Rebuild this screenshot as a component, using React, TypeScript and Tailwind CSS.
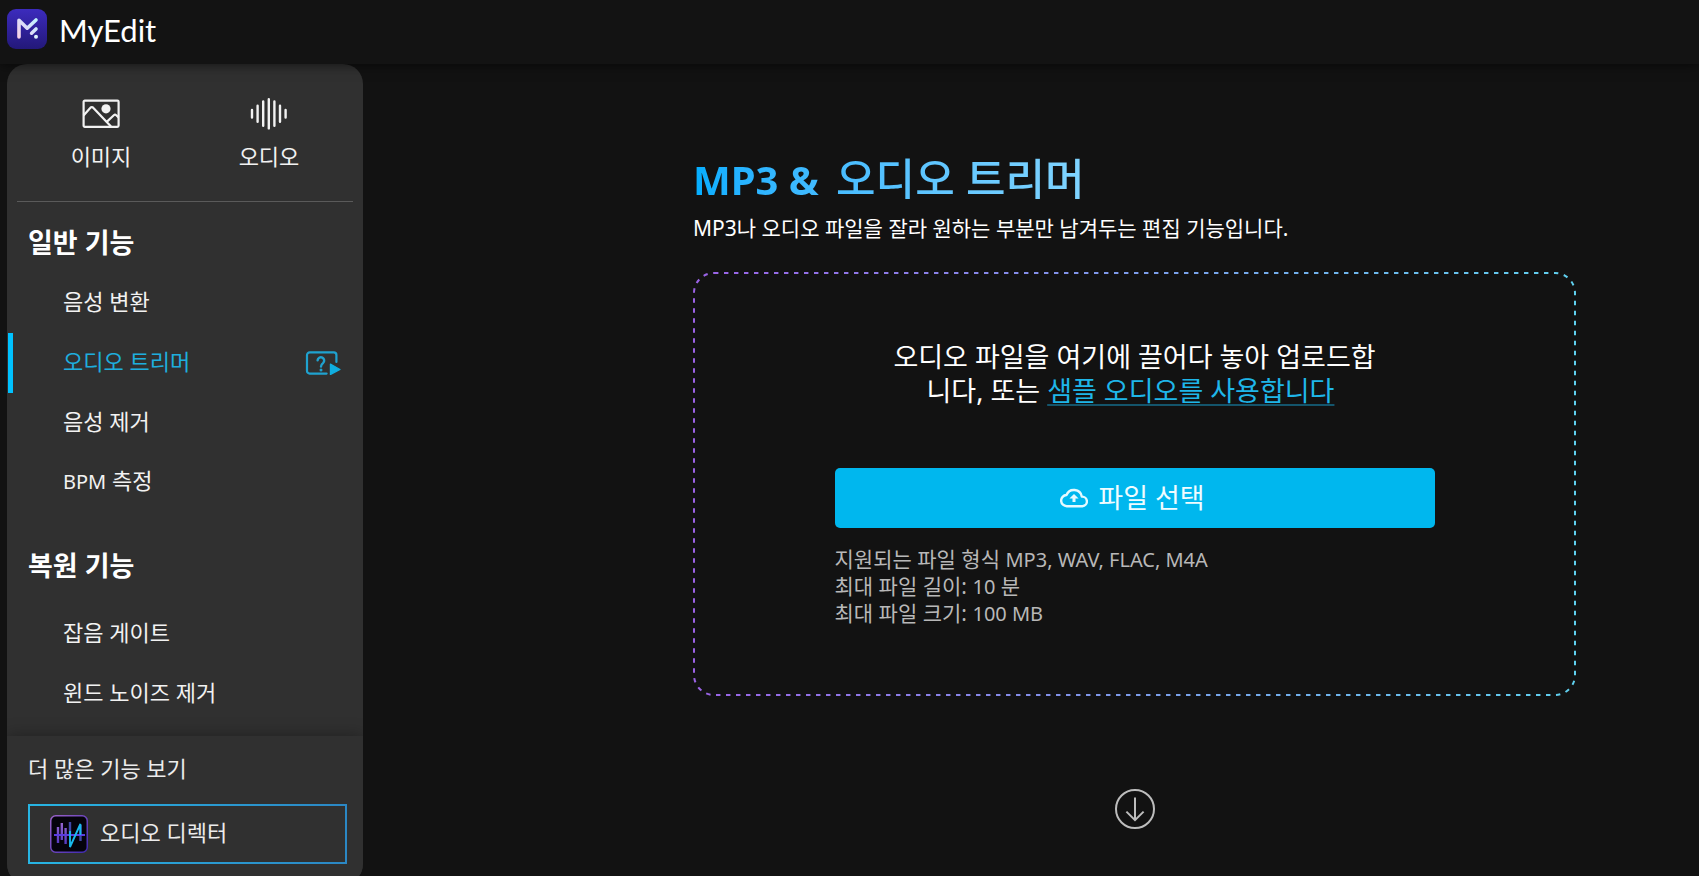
import React from "react";

function LogoMark() {
  return (
    <svg className="size-10 shrink-0" viewBox="0 0 40 40" aria-hidden="true">
      <defs>
        <linearGradient id="logo-bg" x1="0" y1="0" x2="0" y2="1">
          <stop offset="0" stopColor="#3c2bbd" />
          <stop offset="1" stopColor="#231879" />
        </linearGradient>
        <linearGradient id="logo-m" x1="10" y1="29" x2="31" y2="10" gradientUnits="userSpaceOnUse">
          <stop offset="0" stopColor="#fbd0e4" />
          <stop offset="0.5" stopColor="#dcdcf8" />
          <stop offset="1" stopColor="#bdf6ff" />
        </linearGradient>
      </defs>
      <rect width="40" height="40" rx="9" fill="url(#logo-bg)" />
      <g stroke="url(#logo-m)" strokeWidth="3.6" strokeLinecap="round" strokeLinejoin="round" fill="none">
        <path d="M12 28V11.2L20.2 19.2L29 11" />
        <path d="M24.6 24.2L29 20" />
      </g>
      <circle cx="29" cy="27.8" r="2" fill="#dff3fb" />
    </svg>
  );
}

function ImageIcon() {
  return (
    <svg className="h-8 w-10" viewBox="0 0 40 32" fill="none" stroke="#f2f2f2" strokeWidth="2.2" aria-hidden="true">
      <rect x="2.6" y="2.6" width="35" height="26.2" rx="1.2" />
      <path d="M2.6 17.5L9.4 9.8a1.8 1.8 0 0 1 2.8 0L30 28.6M26 23.6L32.8 17.2a1.8 1.8 0 0 1 2.4 0L37.6 19.4" />
      <circle cx="25" cy="10.8" r="4.6" fill="#f2f2f2" stroke="none" />
    </svg>
  );
}

function AudioIcon() {
  return (
    <svg className="h-8 w-10" viewBox="0 0 40 32" fill="none" stroke="#f2f2f2" strokeWidth="2.4" strokeLinecap="round" aria-hidden="true">
      <path d="M3 12V19.6M8.6 7.8V23.8M14.2 3.4V27.8M19.8 1.2V30.4M25.4 3.4V27.8M31 7.8V23.8M36.6 12V19.6" />
    </svg>
  );
}

function TutorialIcon() {
  return (
    <svg className="h-6 w-9" viewBox="0 0 36 24" fill="none" stroke="#1fa2cf" strokeWidth="2.2" strokeLinecap="round" aria-hidden="true">
      <path d="M31.4 11V4a2.6 2.6 0 0 0-2.6-2.6H4.6A2.6 2.6 0 0 0 2 4v16a2.6 2.6 0 0 0 2.6 2.6h17" />
      <path d="M12.6 9.4a3.3 3.3 0 1 1 5.4 2.7c-1.4 1.1-2 1.6-2 3.4" strokeWidth="2.4" />
      <circle cx="16" cy="19" r="1.5" fill="#1fa2cf" stroke="none" />
      <path d="M25.4 13L35 18.4L25.4 23.6Z" fill="#10aee0" stroke="#10aee0" strokeWidth="1.2" strokeLinejoin="round" />
    </svg>
  );
}

function DirectorIcon() {
  return (
    <svg className="size-[38px] shrink-0" viewBox="0 0 38 38" aria-hidden="true">
      <defs>
        <linearGradient id="dir-frame" x1="0" y1="0" x2="1" y2="1">
          <stop offset="0" stopColor="#9a62c8" />
          <stop offset="1" stopColor="#3f2ab0" />
        </linearGradient>
        <linearGradient id="dir-bar" x1="0" y1="6" x2="0" y2="32" gradientUnits="userSpaceOnUse">
          <stop offset="0" stopColor="#9b6ad0" />
          <stop offset="1" stopColor="#4b32c0" />
        </linearGradient>
      </defs>
      <rect x="0.75" y="0.75" width="36.5" height="36.5" rx="5" fill="#05030c" stroke="url(#dir-frame)" strokeWidth="1.5" />
      <g stroke="url(#dir-bar)" strokeWidth="2.4">
        <path d="M8 12V28M11.8 8V25M15.6 13V29" />
        <path d="M20 7V20M30.5 10V26" stroke="#4048a8" />
      </g>
      <path d="M4 20H35" stroke="#5a3ce0" strokeWidth="1.8" />
      <path d="M20 16V32L30.4 9V20" stroke="#18b9ec" strokeWidth="1.9" fill="none" />
    </svg>
  );
}

function CloudUploadIcon() {
  return (
    <svg className="h-5 w-7 shrink-0" viewBox="0 0 28 20" fill="none" aria-hidden="true">
      <path
        d="M7 18.2a5.6 5.6 0 0 1-.5-11.2A8 8 0 0 1 21.8 8.6a4.8 4.8 0 0 1 .6 9.6Z"
        stroke="#e6faff"
        strokeWidth="2.4"
        strokeLinejoin="round"
      />
      <path d="M14 6L18.6 10.6H15.5V14H12.5V10.6H9.4Z" fill="#e6faff" />
    </svg>
  );
}

function DashedFrame() {
  return (
    <svg className="pointer-events-none absolute inset-0 size-full p-px" overflow="visible" aria-hidden="true">
      <defs>
        <linearGradient id="frame" x1="0" y1="0" x2="1" y2="0">
          <stop offset="0" stopColor="#9b62e6" />
          <stop offset="0.5" stopColor="#7d9cea" />
          <stop offset="1" stopColor="#5fd0ee" />
        </linearGradient>
      </defs>
      <rect width="100%" height="100%" rx="20" fill="none" stroke="url(#frame)" strokeWidth="2" strokeDasharray="4.4 5.6" />
    </svg>
  );
}

type Item = { id: string; label: React.ReactNode; active?: boolean };

const generalItems: Item[] = [
  { id: "voice-changer", label: "음성 변환" },
  { id: "trimmer", label: "오디오 트리머", active: true },
  { id: "vocal-remover", label: "음성 제거" },
  {
    id: "bpm",
    label: (
      <span>
        <span className="text-[20px]">BPM</span> 측정
      </span>
    ),
  },
];

const restoreItems: Item[] = [
  { id: "noise-gate", label: "잡음 게이트" },
  { id: "wind", label: "윈드 노이즈 제거" },
];

function NavList({ items }: { items: Item[] }) {
  return (
    <ul>
      {items.map(({ id, label, active }) => (
        <li key={id}>
          <a
            href="#"
            aria-current={active ? "page" : undefined}
            className={
              active
                ? "ml-px flex h-15 items-center justify-between border-l-5 border-[#00c2ff] pr-[22px] pb-1 pl-[50px] text-[#1eaede]"
                : "flex h-15 items-center pb-1 pl-14 text-[#f2f2f2]"
            }
          >
            {label}
            {active && (
              <span className="pt-1">
                <TutorialIcon />
              </span>
            )}
          </a>
        </li>
      ))}
    </ul>
  );
}

function Sidebar() {
  return (
    <aside className="flex w-[356px] shrink-0 flex-col self-start overflow-hidden rounded-[20px] bg-[#303030] text-[22px] leading-7">
      <div className="mx-[10px] grid grid-cols-2 border-b border-[#5a5a5a] pt-[34px] pb-[31px] text-[#f2f2f2]">
        <a href="#" className="flex flex-col items-center gap-3">
          <ImageIcon />
          이미지
        </a>
        <a href="#" className="flex flex-col items-center gap-3">
          <AudioIcon />
          오디오
        </a>
      </div>
      <nav className="flex flex-col pb-3">
        <h2 className="pt-[21px] pb-[10px] pl-[21px] text-[27px] leading-10 font-bold text-white">일반 기능</h2>
        <NavList items={generalItems} />
        <h2 className="pt-[33px] pb-[18px] pl-[21px] text-[27px] leading-10 font-bold text-white">복원 기능</h2>
        <NavList items={restoreItems} />
      </nav>
      <div className="bg-[#303030] px-[21px] pt-[18px] pb-5 text-[#ececec] shadow-[0_0_16px_rgba(0,0,0,0.35)]">
        <p>더 많은 기능 보기</p>
        <a href="#" className="mt-[22px] mr-[-5px] block bg-linear-to-r from-[#27b5e3] to-[#2b87c4] p-0.5">
          <span className="flex h-14 items-center gap-3 bg-[#303030] pl-5">
            <DirectorIcon />
            <span className="pb-1">오디오 디렉터</span>
          </span>
        </a>
      </div>
    </aside>
  );
}

export default function App() {
  return (
    <div className="flex h-screen flex-col overflow-hidden bg-[#121212] font-['Noto_Sans','Noto_Sans_CJK_KR',sans-serif] text-white">
      <header className="z-10 flex h-16 shrink-0 items-center bg-[#131313] pr-2 pb-[6px] pl-[7px] shadow-[0_0_12px_rgba(0,0,0,0.7)]">
        <a href="#" className="flex items-center gap-3">
          <LogoMark />
          <span className="pt-0.5 font-['Lato',sans-serif] text-[31px] leading-9">MyEdit</span>
        </a>
      </header>

      <div className="flex min-h-0 flex-1 pl-[7px]">
        <Sidebar />
        <main className="flex min-w-0 flex-1 flex-col pt-[87px] pr-[123px] pl-[330px]">
          <h1 className="self-start bg-linear-to-r from-[#00aeff] to-[#80d4ff] bg-clip-text text-[43px] leading-[56px] font-medium text-transparent">
            <span className="mr-1.5 text-[40px] font-bold">MP3 &amp;</span> 오디오 트리머
          </h1>
          <p className="mt-1 text-[21px] leading-8">MP3나 오디오 파일을 잘라 원하는 부분만 남겨두는 편집 기능입니다.</p>

          <section className="relative mt-7 flex flex-col items-center px-10 pt-[68px] pb-[69px]">
            <DashedFrame />
            <p className="text-center text-[27px] leading-[34px]">
              오디오 파일을 여기에 끌어다 놓아 업로드합
              <br />
              니다, 또는{" "}
              <a
                href="#"
                className="mr-2 text-[#1fb6e9] underline decoration-[#14556c] decoration-2 underline-offset-[3px] [text-decoration-skip-ink:none]"
              >
                샘플 오디오를 사용합니다
              </a>
            </p>
            <button
              type="button"
              className="mt-[60px] flex h-15 w-full max-w-[600px] items-center justify-center gap-2.5 rounded-[5px] bg-[#00b7ee] pr-1 text-[27px] text-[#f0fcff]"
            >
              <CloudUploadIcon />
              파일 선택
            </button>
            <div className="mt-[18px] w-full max-w-[600px] text-[21px] leading-[26px] text-[#b8b8b8]">
              <p>
                지원되는 파일 형식 <span className="text-[20px]">MP3, WAV, FLAC, M4A</span>
              </p>
              <p>
                최대 파일 길이: <span className="text-[20px]">10</span> 분
              </p>
              <p>
                최대 파일 크기: <span className="text-[20px]">100 MB</span>
              </p>
            </div>
          </section>

          <button type="button" aria-label="아래로 스크롤" className="mt-[92px] self-center">
            <svg className="size-[42px]" viewBox="0 0 42 42" fill="none" stroke="#bdbdbd" strokeWidth="2" aria-hidden="true">
              <circle cx="21" cy="21" r="19" />
              <path d="M21 9.4V32M12.4 23.6L21 32.2L29.6 23.6" />
            </svg>
          </button>
        </main>
      </div>
    </div>
  );
}
